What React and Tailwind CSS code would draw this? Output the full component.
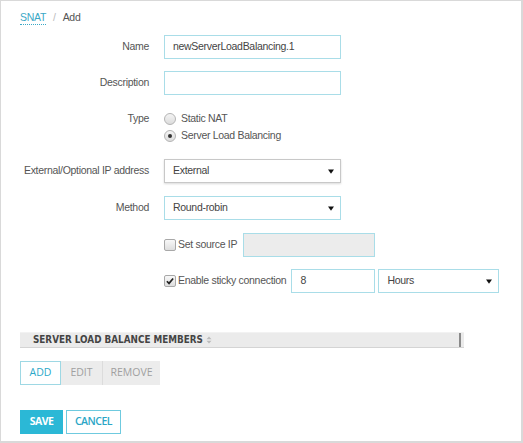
import { useState } from 'react';

const txt = "text-[10.5px] tracking-[-0.3px]";
const label = `w-[148px] shrink-0 text-right ${txt} text-[#555]`;
const box = "h-[24px] border border-[#a9dde8] px-[8px] text-[#444] flex items-center";

const Arrow = () => (
  <svg width="6" height="5" viewBox="0 0 6 5" className="shrink-0">
    <path d="M0 0.5 H6 L3 4.8 Z" fill="#111" />
  </svg>
);

const Select = ({ value, width, gray }) => (
  <div
    className={`${box} ${txt} bg-white justify-between pr-[6px] ${width} ${gray ? 'border-[#c8c8c8] shadow-[0_1px_2px_rgba(0,0,0,0.15)]' : ''}`}
  >
    <span>{value}</span>
    <Arrow />
  </div>
);

const Radio = ({ checked }) => (
  <span className="w-[12px] h-[12px] rounded-full border border-[#b4b4b4] bg-gradient-to-b from-[#f4f4f4] to-[#dcdcdc] flex items-center justify-center shrink-0">
    {checked && <span className="w-[4px] h-[4px] rounded-full bg-[#333]" />}
  </span>
);

const Checkbox = ({ checked }) => (
  <span className="w-[12px] h-[12px] rounded-[2px] border border-[#a8a8a8] bg-gradient-to-b from-[#f8f8f8] to-[#dedede] flex items-center justify-center shrink-0">
    {checked && (
      <svg width="8" height="8" viewBox="0 0 9 9">
        <path d="M1 4.8 L3.4 7.2 L8 1.6" stroke="#222" strokeWidth="1.9" fill="none" />
      </svg>
    )}
  </span>
);

const App = () => {
  const [type] = useState('slb');

  return (
    <div className="w-[523px] h-[443px] border border-[#d9d9d9] border-r-2 border-b-2 bg-white font-['Liberation_Sans',Arial,sans-serif] text-[#444] overflow-hidden">
      {/* Breadcrumb */}
      <div className={`h-[34px] pl-[19px] pt-[10px] ${txt} flex items-start gap-[7px]`}>
        <span className="text-[#3aa8c6] border-b border-dotted border-[#3aa8c6] leading-[13px]">SNAT</span>
        <span className="text-[#bbb] leading-[13px]">/</span>
        <span className="text-[#555] leading-[13px]">Add</span>
      </div>

      {/* Form */}
      <div className="flex flex-col">
        <div className="flex items-center">
          <div className={label}>Name</div>
          <div className={`${box} ${txt} bg-white ml-[15px] w-[177px]`}>newServerLoadBalancing.1</div>
        </div>

        <div className="flex items-center mt-[12px]">
          <div className={label}>Description</div>
          <div className={`${box} bg-white ml-[15px] w-[177px]`} />
        </div>

        <div className="flex items-start mt-[15px]">
          <div className={`${label} leading-[17px]`}>Type</div>
          <div className={`ml-[15px] flex flex-col ${txt} text-[#555]`}>
            <div className="h-[17px] flex items-center gap-[5px]">
              <Radio checked={type === 'nat'} /> Static NAT
            </div>
            <div className="h-[17px] flex items-center gap-[5px]">
              <Radio checked={type === 'slb'} /> Server Load Balancing
            </div>
          </div>
        </div>

        <div className="flex items-center mt-[15px]">
          <div className={label}>External/Optional IP address</div>
          <div className="ml-[15px]">
            <Select value="External" width="w-[177px]" gray />
          </div>
        </div>

        <div className="flex items-center mt-[13px]">
          <div className={label}>Method</div>
          <div className="ml-[15px]">
            <Select value="Round-robin" width="w-[177px]" />
          </div>
        </div>

        <div className="flex items-center mt-[13px]">
          <div className="w-[148px] shrink-0" />
          <div className={`ml-[15px] flex items-center ${txt} text-[#555]`}>
            <Checkbox />
            <span className="ml-[2px]">Set source IP</span>
            <div className={`${box} ml-[6px] w-[132px] bg-[#ececec]`} />
          </div>
        </div>

        <div className="flex items-center mt-[12px]">
          <div className="w-[148px] shrink-0" />
          <div className={`ml-[15px] flex items-center ${txt} text-[#555]`}>
            <Checkbox checked />
            <span className="ml-[2px]">Enable sticky connection</span>
            <div className={`${box} bg-white ml-[5px] w-[84px]`}>8</div>
            <div className="ml-[3px]">
              <Select value="Hours" width="w-[121px]" />
            </div>
          </div>
        </div>
      </div>

      {/* Members table */}
      <div className="ml-[19px] mt-[39px] w-[444px] h-[16px] flex bg-[#ebebeb] border-t border-[#f2f2f2] border-b border-b-[#d4d4d4]">
        <div className="flex-1 flex items-center pl-[13px] border-r-2 border-[#8a8a8a] font-['DejaVu_Sans_Condensed','DejaVu_Sans',sans-serif] font-bold text-[9.8px] text-[#444]">
          SERVER LOAD BALANCE MEMBERS
          <svg width="6" height="8" viewBox="0 0 6 8" className="ml-[3px]">
            <path d="M0.5 3.2 L3 0.5 L5.5 3.2 Z M0.5 4.8 L3 7.5 L5.5 4.8 Z" fill="#bbb" />
          </svg>
        </div>
        <div className="w-[3px]" />
      </div>

      <div className="ml-[19px] mt-[13px] flex h-[24px] font-['Open_Sans',sans-serif] text-[10.5px]">
        <button className="w-[41px] border border-[#9ed8e4] bg-white text-[#2aa8c8]">ADD</button>
        <button className="w-[41px] bg-[#ececec] text-[#a0a0a0]">EDIT</button>
        <button className="w-[58px] bg-[#ececec] text-[#a0a0a0] border-l border-[#dcdcdc]">REMOVE</button>
      </div>

      <div className="ml-[19px] mt-[25px] flex h-[24px] gap-[3px] font-['Open_Sans',sans-serif] text-[10.5px] tracking-[-0.5px]">
        <button className="w-[43px] bg-[#2bb8d6] text-white font-bold">SAVE</button>
        <button className="w-[55px] border border-[#6fcadf] bg-white text-[#2ba6c6] font-semibold">CANCEL</button>
      </div>
    </div>
  );
};

export default App;
